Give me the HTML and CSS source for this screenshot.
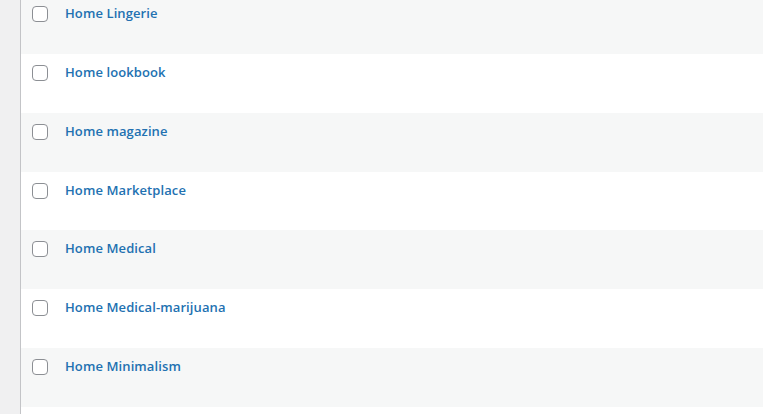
FILE: index.html
```html
<!DOCTYPE html>
<html>
<head>
<meta charset="utf-8">
<link rel="stylesheet" href="styles.css">
</head>
<body>
<div class="page">
  <div class="sidebar"></div>
  <div class="table">
    <div class="row alt"><span class="check"></span><a class="title" href="#">Home Lingerie</a></div>
    <div class="row"><span class="check"></span><a class="title" href="#">Home lookbook</a></div>
    <div class="row alt"><span class="check"></span><a class="title" href="#">Home magazine</a></div>
    <div class="row"><span class="check"></span><a class="title" href="#">Home Marketplace</a></div>
    <div class="row alt"><span class="check"></span><a class="title" href="#">Home Medical</a></div>
    <div class="row"><span class="check"></span><a class="title" href="#">Home Medical-marijuana</a></div>
    <div class="row alt"><span class="check"></span><a class="title" href="#">Home Minimalism</a></div>
    <div class="row"></div>
  </div>
</div>
</body>
</html>
```
FILE: styles.css
```css
html, body {
  margin: 0;
  padding: 0;
  height: 100%;
  overflow: hidden;
  background: #ffffff;
}
.page {
  display: flex;
  height: 100%;
}
.sidebar {
  width: 20px;
  flex: none;
  background: #f0f0f1;
  border-right: 1px solid #c3c4c7;
}
.table {
  flex: 1;
  margin-top: -4.83px;
  display: flex;
  flex-direction: column;
}
.row {
  height: 58.83px;
  flex: none;
  box-sizing: border-box;
  display: flex;
  align-items: flex-start;
  padding-left: 11px;
  background: #ffffff;
}
.row.alt {
  background: #f6f7f7;
}
.check {
  box-sizing: border-box;
  width: 16px;
  height: 16px;
  margin-top: 11px;
  border: 1px solid #8c8f94;
  border-radius: 4px;
  background: #ffffff;
  flex: none;
}
.title {
  margin-left: 17px;
  margin-top: 8px;
  font-family: "Open Sans", "Noto Sans", sans-serif;
  font-size: 13px;
  font-weight: 600;
  line-height: 20px;
  letter-spacing: 0.1px;
  color: #2271b1;
  text-decoration: none;
}
```
